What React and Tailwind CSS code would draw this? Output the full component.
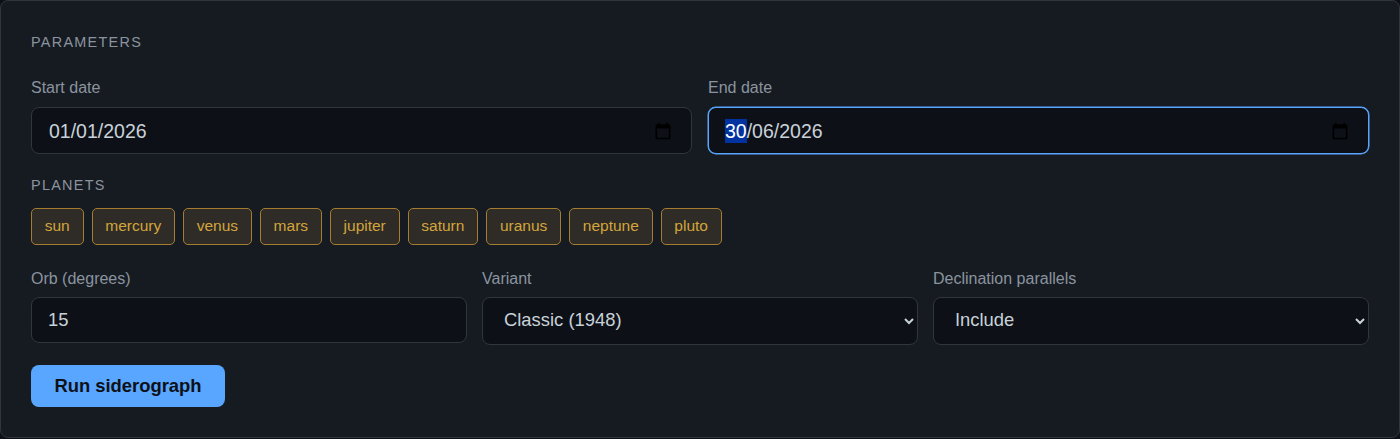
import React from 'react';

const planets = ['sun', 'mercury', 'venus', 'mars', 'jupiter', 'saturn', 'uranus', 'neptune', 'pluto'];

const CalendarIcon = () => (
  <svg width="20" height="20" viewBox="0 0 24 24" fill="#000" className="shrink-0">
    <path d="M19 4h-1V2h-2v2H8V2H6v2H5c-1.1 0-2 .9-2 2v14c0 1.1.9 2 2 2h14c1.1 0 2-.9 2-2V6c0-1.1-.9-2-2-2zm0 16H5V9h14v11z" />
  </svg>
);

const Label = ({ children, className = 'mb-[10px]' }) => (
  <label className={`block text-[16px] leading-[18px] text-[#8b949e] ${className}`}>{children}</label>
);

const SectionTitle = ({ children, className }) => (
  <h3 className={`text-[14.4px] leading-[16px] font-normal uppercase tracking-[1.3px] text-[#8b949e] ${className}`}>{children}</h3>
);

const DateField = ({ focused, children }) => (
  <div
    className={`h-[47px] flex items-center justify-between pl-[17px] pr-[18px] rounded-[8px] bg-[#0d1117] text-[19.5px] leading-[24px] text-[#c9d1d9] border ${
      focused ? 'border-[#58a6ff] shadow-[0_0_0_0.5px_#58a6ff]' : 'border-[#30363d]'
    }`}
  >
    <span className="pt-[1px]">{children}</span>
    <CalendarIcon />
  </div>
);

const selectCls =
  'w-full h-[48px] pl-[17px] pr-[2px] pb-[3px] rounded-[8px] bg-[#0d1117] border border-[#30363d] text-[18.4px] text-[#c9d1d9] outline-none';

export default function App() {
  return (
    <div className="min-h-screen bg-[#0d1117] font-['Liberation_Sans',Arial,sans-serif]">
      <div className="h-[438px] bg-[#161b22] border border-[#30363d] rounded-[8px] px-[30px] pt-[33px]">
        <SectionTitle className="mb-[29px]">Parameters</SectionTitle>

        <div className="grid grid-cols-2 gap-[16px]">
          <div>
            <Label>Start date</Label>
            <DateField>01/01/2026</DateField>
          </div>
          <div>
            <Label>End date</Label>
            <DateField focused>
              <span className="inline-block -ml-[1px] bg-[#0033a0] text-white">30</span>/06/2026
            </DateField>
          </div>
        </div>

        <SectionTitle className="mt-[23px] mb-[15px]">Planets</SectionTitle>
        <div className="flex flex-wrap gap-[8px]">
          {planets.map((p) => (
            <button
              key={p}
              className="h-[37px] px-[12.75px] pb-[2px] rounded-[5px] border border-[#a67c30] bg-[#2f2c28] text-[15.5px] text-[#d4a53a]"
            >
              {p}
            </button>
          ))}
        </div>

        <div className="grid grid-cols-3 gap-[15px] mt-[25px]">
          <div>
            <Label className="mb-[9px]">Orb (degrees)</Label>
            <input
              defaultValue="15"
              className="w-full h-[46px] px-[16px] rounded-[8px] bg-[#0d1117] border border-[#30363d] text-[18.4px] text-[#c9d1d9] outline-none"
            />
          </div>
          <div>
            <Label className="mb-[9px]">Variant</Label>
            <select className={selectCls} defaultValue="classic">
              <option value="classic">Classic (1948)</option>
            </select>
          </div>
          <div>
            <Label className="mb-[9px]">Declination parallels</Label>
            <select className={selectCls} defaultValue="include">
              <option value="include">Include</option>
            </select>
          </div>
        </div>

        <button className="mt-[20px] h-[42px] w-[194px] rounded-[8px] bg-[#58a6ff] text-[#0d1117] text-[18.4px] font-bold">
          Run siderograph
        </button>
      </div>
    </div>
  );
}
